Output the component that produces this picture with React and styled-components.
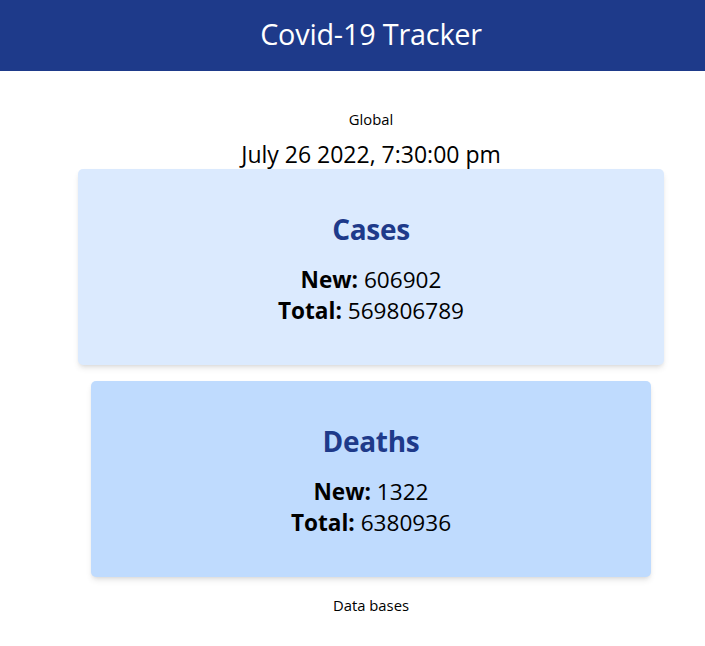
import React from "react";
import styled, { createGlobalStyle } from "styled-components";

const GlobalStyle = createGlobalStyle`
  html, body {
    margin: 0;
    padding: 0;
    background: #fff;
  }
  body {
    font-family: "Open Sans", "Noto Sans", sans-serif;
    color: #000;
  }
`;

// in the original the content column is centered at x=371, a little right of the window center
const Header = styled.header`
  height: 71px;
  padding-left: 37px;
  padding-bottom: 3px;
  box-sizing: border-box;
  background-color: #1e3a8a;
  display: flex;
  align-items: center;
  justify-content: center;
`;

const Title = styled.h1`
  margin: 0;
  color: #fff;
  font-size: 28.8px;
  font-weight: 400;
  line-height: 36px;
  letter-spacing: -0.2px;
`;

const Main = styled.main`
  display: flex;
  flex-direction: column;
  align-items: center;
  padding: 38px 0 0 37px;
`;

const Caption = styled.p`
  margin: 0;
  font-size: 14.8px;
  line-height: 20px;
`;

const DateLine = styled.p`
  margin: 9px 0 0;
  font-size: 23px;
  line-height: 32px;
`;

const CardList = styled.div`
  display: flex;
  flex-direction: column;
  align-items: center;
  gap: 16px;
  margin-top: -1px;
`;

const Card = styled.section`
  width: ${(p) => p.width}px;
  box-sizing: border-box;
  padding: 42px 0 39px;
  background-color: ${(p) => p.bg};
  border-radius: 5px;
  box-shadow: 0 4px 6px -1px rgba(0, 0, 0, 0.1), 0 2px 4px -2px rgba(0, 0, 0, 0.1);
  text-align: center;
`;

const CardTitle = styled.h2`
  margin: 0 0 17px;
  color: #1e3a8a;
  font-size: 28px;
  font-weight: 700;
  line-height: 36px;
  letter-spacing: -0.3px;
`;

const Stat = styled.p`
  margin: 0;
  font-size: 22.6px;
  line-height: 31px;

  b {
    font-weight: 700;
  }
`;

const Footer = styled(Caption)`
  margin-top: 18px;
`;

const cards = [
  { title: "Cases", bg: "#dbeafe", width: 586, newCount: "606902", total: "569806789" },
  { title: "Deaths", bg: "#bfdbfe", width: 560, newCount: "1322", total: "6380936" }
];

export default function App() {
  return (
    <>
      <GlobalStyle />
      <Header>
        <Title>Covid-19 Tracker</Title>
      </Header>
      <Main>
        <Caption>Global</Caption>
        <DateLine>July 26 2022, 7:30:00 pm</DateLine>
        <CardList>
          {cards.map((c) => (
            <Card key={c.title} bg={c.bg} width={c.width}>
              <CardTitle>{c.title}</CardTitle>
              <Stat>
                <b>New:</b> {c.newCount}
              </Stat>
              <Stat>
                <b>Total:</b> {c.total}
              </Stat>
            </Card>
          ))}
        </CardList>
        <Footer>Data bases</Footer>
      </Main>
    </>
  );
}
